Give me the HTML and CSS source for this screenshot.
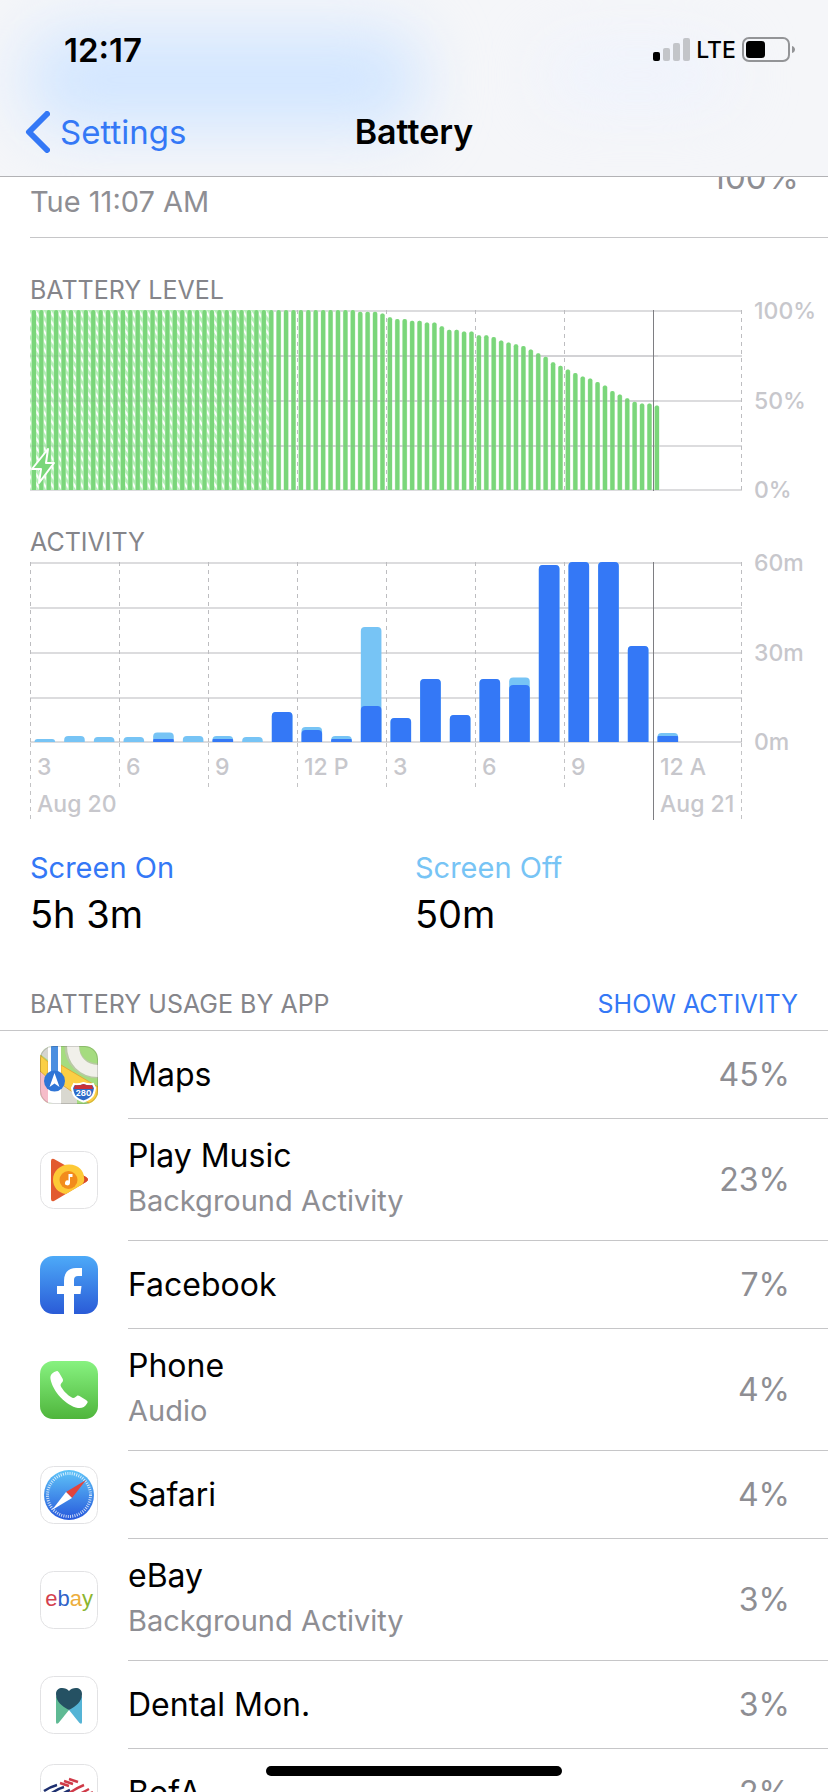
FILE: index.html
```html
<!DOCTYPE html>
<html lang="en">
<head>
<meta charset="utf-8">
<meta name="viewport" content="width=device-width, initial-scale=1">
<title>Battery</title>
<link rel="stylesheet" href="styles.css">
</head>
<body>
<div class="screen">
  <header class="header">
    <div class="status">
      <span class="clock">12:17</span>
      <div class="status-icons">
        <svg class="signal" viewBox="0 0 37 24" aria-hidden="true">
          <rect x="0" y="14" width="7" height="9" rx="2" fill="#000"/>
          <rect x="10" y="10" width="7" height="13" rx="2" fill="#c3c5c9"/>
          <rect x="20" y="5" width="7" height="18" rx="2" fill="#c3c5c9"/>
          <rect x="30" y="0" width="7" height="23" rx="2" fill="#c3c5c9"/>
        </svg>
        <span class="network">LTE</span>
        <svg class="cell" viewBox="0 0 54 26" aria-hidden="true">
          <rect x="1" y="1" width="46" height="23" rx="6" fill="none" stroke="#939497" stroke-width="2"/>
          <rect x="4" y="4" width="19" height="17" rx="3.500" fill="#000"/>
          <path d="M50 9c4 1 4 6 0 7z" fill="#939497"/>
        </svg>
      </div>
    </div>
    <nav class="nav">
      <a class="back" href="#">
        <svg class="chevron" viewBox="0 0 25 42" aria-hidden="true"><path d="M22 3 4 21 22 39" fill="none" stroke="#3478f6" stroke-width="6" stroke-linecap="round" stroke-linejoin="round"/></svg>
        Settings
      </a>
      <h1 class="title">Battery</h1>
    </nav>
  </header>

  <main class="content">
    <section class="charge">
      <span class="charge-time">Tue 11:07 AM</span>
      <span class="charge-level">100%</span>
    </section>

    <section class="panel">
      <h2 class="label">BATTERY LEVEL</h2>
      <div class="chart">
        <svg class="plot" id="level" viewBox="0 0 712 181" preserveAspectRatio="none" role="img" aria-label="Battery level"></svg>
        <div class="scale"><span>100%</span><span>50%</span><span>0%</span></div>
      </div>

      <h2 class="label label-activity">ACTIVITY</h2>
      <div class="chart">
        <svg class="plot" id="activity" viewBox="0 0 712 181" preserveAspectRatio="none" role="img" aria-label="Activity"></svg>
        <div class="scale"><span>60m</span><span>30m</span><span>0m</span></div>
      </div>
      <div class="hours">
        <div class="hour hour-day"><span>3</span><span>Aug 20</span></div>
        <div class="hour"><span>6</span></div>
        <div class="hour"><span>9</span></div>
        <div class="hour"><span>12 P</span></div>
        <div class="hour"><span>3</span></div>
        <div class="hour"><span>6</span></div>
        <div class="hour"><span>9</span></div>
        <div class="hour hour-day hour-midnight"><span>12 A</span><span>Aug 21</span></div>
      </div>

      <dl class="totals">
        <div class="total"><dt class="on">Screen On</dt><dd>5h 3m</dd></div>
        <div class="total"><dt class="off">Screen Off</dt><dd>50m</dd></div>
      </dl>
    </section>

    <section class="usage">
      <div class="usage-head">
        <h2 class="label">BATTERY USAGE BY APP</h2>
        <button class="toggle" type="button">SHOW ACTIVITY</button>
      </div>
      <ul class="apps">
        <li class="app">
          <svg class="icon" viewBox="0 0 58 58" aria-hidden="true">
            <defs><clipPath id="tile"><rect width="58" height="58" rx="13"/></clipPath></defs>
            <g clip-path="url(#tile)">
              <rect width="58" height="58" fill="#a5dc7f"/>
              <path d="M0 0h8v14L0 8z" fill="#d5d5d0"/>
              <path d="M0 24l8 7v27H0z" fill="#f6bdc9"/>
              <path d="M21 38l16 8v12H21z" fill="#d9d8d0"/>
              <path d="M0 9l8 7v16l-8-7zM21 19l37 22v17h-8L21 38z" fill="#fbcf45" stroke="#e0a93a" stroke-width="1"/>
              <path d="M32 0c0 14 11 25 26 25" fill="none" stroke="#b9c9a4" stroke-width="15"/>
              <path d="M33 0c0 14 10 25 25 25" fill="none" stroke="#f1f0ea" stroke-width="12"/>
              <rect x="8" y="0" width="13" height="58" fill="#fff"/>
              <rect x="11" y="0" width="7" height="30" fill="#4b8fe0"/>
              <circle cx="14.500" cy="35" r="10.500" fill="#2f75d6"/>
              <path d="M14.500 27l5 14-5-3.500-5 3.500z" fill="#fff"/>
              <path d="M34 38q4 1 9.500-1 5.500 2 9.500 1l2 4c-1 7-2 10-11.500 13.500C34 52 33 49 32 42z" fill="#2c6bc9" stroke="#fff" stroke-width="2"/>
              <path d="M35 39q4 1 8.500-1 4.500 2 8.500 1l1 4H34z" fill="#c8313a"/>
              <text class="shield" x="43.500" y="50" text-anchor="middle">280</text>
            </g>
            <rect x=".5" y=".5" width="57" height="57" rx="12.500" fill="none" stroke="#000" stroke-opacity=".15"/>
          </svg>
          <div class="names"><span class="name">Maps</span></div><span class="share">45%</span>
        </li>
        <li class="app app-tall">
          <svg class="icon" viewBox="0 0 58 58" aria-hidden="true">
            <rect x=".5" y=".5" width="57" height="57" rx="13" fill="#fff" stroke="#e2e2e4"/>
            <path d="M11 10q0-3 3-2l32 18q4 2.500 0 5L14 50q-3 1-3-2z" fill="#e25a2f"/>
            <path d="M39 22l7 4q4 2.500 0 5l-7 4z" fill="#d94a2c"/>
            <path d="M29 13.500c10 0 15 7 15 13q1 4-2 7L26 43c-8-1-13-7-13-14.500 0-8 7-15 16-15z" fill="#fdc936"/>
            <circle cx="28.500" cy="29" r="9" fill="#f28c1c"/>
            <path d="M28.500 23h4v3H30v6a2.500 2.500 0 1 1-1.500-2.400z" fill="#fff"/>
          </svg>
          <div class="names"><span class="name">Play Music</span><span class="detail">Background Activity</span></div><span class="share">23%</span>
        </li>
        <li class="app">
          <svg class="icon" viewBox="0 0 58 58" aria-hidden="true">
            <defs><linearGradient id="fb" x1="0" y1="0" x2="0" y2="1"><stop offset="0" stop-color="#4daaf8"/><stop offset="1" stop-color="#2a5bd7"/></linearGradient></defs>
            <rect width="58" height="58" rx="13" fill="url(#fb)"/>
            <path d="M24 58V38h-7v-8h7v-5c0-9 5-13 12-13h6v8h-4q-4 0-4 4v6h7.500l-1 8H34v20z" fill="#fff"/>
          </svg>
          <div class="names"><span class="name">Facebook</span></div><span class="share">7%</span>
        </li>
        <li class="app app-tall">
          <svg class="icon" viewBox="0 0 58 58" aria-hidden="true">
            <defs><linearGradient id="ph" x1="0" y1="0" x2="0" y2="1"><stop offset="0" stop-color="#87f280"/><stop offset="1" stop-color="#4fb53c"/></linearGradient></defs>
            <rect width="58" height="58" rx="13" fill="url(#ph)"/>
            <path d="M15.500 10.500c1.500-1 2.500-.5 3.500 1l3.500 6c1 2 .5 3-1 4.500-1 1.500-1.500 2 0 4.500 3 4.500 5 6.500 9.500 9.500 2 1.500 3 1 4.500 0 1.500-1.500 2.500-2 4-1l6.500 4c2 1.500 2 2 1 3.500-2 3.500-5 5-9 4.500C26 45 12.500 30 10.500 18c-.5-4 1.500-6 5-7.500z" fill="#fff"/>
          </svg>
          <div class="names"><span class="name">Phone</span><span class="detail">Audio</span></div><span class="share">4%</span>
        </li>
        <li class="app">
          <svg class="icon" viewBox="0 0 58 58" aria-hidden="true">
            <defs><linearGradient id="sf" x1="0" y1="0" x2="0" y2="1"><stop offset="0" stop-color="#5fc4f8"/><stop offset="1" stop-color="#2759dc"/></linearGradient></defs>
            <rect x=".5" y=".5" width="57" height="57" rx="13" fill="#fff" stroke="#e2e2e4"/>
            <circle cx="29" cy="29" r="25" fill="url(#sf)"/>
            <circle cx="29" cy="29" r="21.500" fill="none" stroke="#fff" stroke-opacity=".75" stroke-width="3" stroke-dasharray="1 1.250"/>
            <path d="M46 14L26 26l6 6z" fill="#e3443c"/>
            <path d="M12 44l14-18 6 6z" fill="#fff"/>
          </svg>
          <div class="names"><span class="name">Safari</span></div><span class="share">4%</span>
        </li>
        <li class="app app-tall">
          <svg class="icon" viewBox="0 0 58 58" aria-hidden="true">
            <rect x=".5" y=".5" width="57" height="57" rx="13" fill="#fff" stroke="#e2e2e4"/>
            <text class="ebay" x="29" y="35" text-anchor="middle"><tspan fill="#d4404f">e</tspan><tspan fill="#2f62c8">b</tspan><tspan fill="#edae3c">a</tspan><tspan fill="#8bb52f">y</tspan></text>
          </svg>
          <div class="names"><span class="name">eBay</span><span class="detail">Background Activity</span></div><span class="share">3%</span>
        </li>
        <li class="app">
          <svg class="icon" viewBox="0 0 58 58" aria-hidden="true">
            <rect x=".5" y=".5" width="57" height="57" rx="13" fill="#fff" stroke="#e2e2e4"/>
            <path d="M16 20l13 14-10.500 13q-2.500 2-2.500-1z" fill="#5fba94"/>
            <path d="M42 20L29 34l10.500 13q2.500 2 2.500-1z" fill="#55b4d6"/>
            <path d="M29 15c3-4 13-5 13 3 0 8-6 12-13 16-7-4-13-8-13-16 0-8 10-7 13-3z" fill="#255163"/>
          </svg>
          <div class="names"><span class="name">Dental Mon.</span></div><span class="share">3%</span>
        </li>
        <li class="app">
          <svg class="icon" viewBox="0 0 58 58" aria-hidden="true">
            <rect x=".5" y=".5" width="57" height="57" rx="13" fill="#fff" stroke="#e2e2e4"/>
            <g fill="none" stroke-width="2.500">
              <path d="M4 27q6-4 13-6M9 31q8-6 15-8M16 34q7-5 14-8" stroke="#1d2f6f"/>
              <path d="M20 19l9 3M24 17l9 3M29 15l9 3M24 33q10-8 20-12M32 35q9-6 17-10M41 36q6-5 12-8" stroke="#cf3a48"/>
            </g>
          </svg>
          <div class="names"><span class="name">BofA</span></div><span class="share">2%</span>
        </li>
      </ul>
    </section>
  </main>
  <div class="home-bar"></div>
</div>
<script src="charts.js"></script>
</body>
</html>
```
FILE: styles.css
```css
* { box-sizing: border-box; }

body {
  margin: 0;
  background: #fff;
  color: #000;
  font-family: Inter, "Liberation Sans", sans-serif;
  font-size: 32px;
  line-height: 40px;
}

h1, h2, dl, dd, ul { margin: 0; padding: 0; }

.screen {
  display: flex;
  flex-direction: column;
  height: 100vh;
  overflow: hidden;
  position: relative;
}

.header {
  position: relative;
  flex: none;
  overflow: hidden;
  background: #f5f6f9;
  border-bottom: 1px solid #b2b2b5;
}

.header::before,
.header::after {
  content: "";
  position: absolute;
  border-radius: 40px;
  filter: blur(32px);
}

.header::before {
  left: 3%;
  top: 30px;
  width: 48%;
  height: 100px;
  background: #d2e6ff;
}

.header::after {
  right: 12%;
  top: 50px;
  width: 22%;
  height: 50px;
  background: #edf2fe;
}

.status,
.nav { position: relative; z-index: 1; }

.status {
  display: flex;
  align-items: center;
  justify-content: space-between;
  padding: 30px 32px 0 64px;
}

.clock { font-weight: 600; font-size: 33px; }

.status-icons { display: flex; align-items: center; gap: 6px; }
.signal { width: 37px; height: 24px; }
.network { font-size: 23px; font-weight: 500; }
.cell { width: 54px; height: 26px; }

.nav {
  display: grid;
  grid-template-columns: 1fr auto 1fr;
  align-items: center;
  height: 84px;
  margin-top: 22px;
  padding: 0 25px 4px;
}

.back {
  display: flex;
  align-items: center;
  gap: 10px;
  color: #3478f6;
  font-size: 33px;
  text-decoration: none;
}

.chevron { width: 25px; height: 42px; }
.title { font-size: 34px; font-weight: 600; }

.content { flex: 1; min-height: 0; overflow: hidden; }

.charge {
  display: flex;
  align-items: center;
  justify-content: space-between;
  height: 122px;
  margin: -61px 0 0 30px;
  padding-right: 29px;
  border-bottom: 1px solid #c6c6c8;
  color: #8e8e93;
}

.charge-time { align-self: flex-end; padding-bottom: 15px; font-size: 29px; }
.charge-level { font-size: 33px; }

.panel { padding: 36px 0 0 30px; }

.label {
  color: #85858a;
  font-size: 25px;
  font-weight: 400;
  line-height: 32px;
}

.label-activity { margin-top: 35px; }

.chart { display: flex; margin-top: 4px; }
.plot { flex: 1; min-width: 0; height: 181px; }

.scale {
  display: flex;
  flex: none;
  flex-direction: column;
  justify-content: space-between;
  width: 86px;
  margin: -15px 0;
  padding-left: 12px;
}

.scale,
.hours {
  color: #c7c7cc;
  font-size: 23px;
  font-weight: 500;
  line-height: 32px;
}

.hours {
  display: grid;
  grid-template-columns: repeat(8, 1fr);
  align-items: start;
  margin-right: 86px;
}

.hour {
  display: flex;
  flex-direction: column;
  gap: 5px;
  height: 44px;
  padding: 8px 0 0 7px;
  white-space: nowrap;
  background: repeating-linear-gradient(#c3c3c5 0 4px, transparent 4px 8px) 0 0 / 1px 100% no-repeat;
}

.hour-day { height: 77px; }

.hour-midnight {
  background:
    linear-gradient(#7e7e82, #7e7e82) 0 0 / 1px 100% no-repeat,
    repeating-linear-gradient(#c3c3c5 0 4px, transparent 4px 8px) 100% 0 / 1px 100% no-repeat;
}

.totals { display: flex; padding-top: 28px; }
.total { flex: 0 0 385px; }
.total dt { font-size: 29px; }
.total dd { margin-top: 2px; font-size: 38px; line-height: 48px; }
.on { color: #3478f6; }
.off { color: #77c4f5; }

.usage-head {
  display: flex;
  justify-content: space-between;
  padding: 50px 30px 10px;
  border-bottom: 1px solid #c6c6c8;
}

.toggle {
  padding: 0;
  border: 0;
  background: none;
  color: #3478f6;
  font: inherit;
  font-size: 25px;
  line-height: 32px;
}

.apps { list-style: none; }

.app {
  display: flex;
  align-items: center;
  height: 88px;
  padding-left: 40px;
}

.app-tall { height: 122px; }
.icon { flex: none; width: 58px; height: 58px; margin-right: 30px; }

.names {
  display: flex;
  flex: 1;
  flex-direction: column;
  justify-content: center;
  gap: 5px;
  align-self: stretch;
  border-bottom: 1px solid #c6c6c8;
}

.app-tall .names { padding-bottom: 2px; }

.detail { color: #8e8e93; font-size: 29px; }

.share {
  display: flex;
  align-items: center;
  align-self: stretch;
  padding-right: 38px;
  border-bottom: 1px solid #c6c6c8;
  color: #8e8e93;
}

.shield { fill: #fff; font-size: 8px; font-weight: 700; }
.ebay { font-family: "Liberation Sans", Arial, sans-serif; font-size: 22px; }
.ebay tspan { stroke: currentColor; stroke-width: 0; }

.home-bar {
  position: absolute;
  left: 50%;
  bottom: 16px;
  width: 296px;
  height: 10px;
  margin-left: -148px;
  border-radius: 5px;
  background: #000;
}
```
FILE: charts.js
```js
const NS = "http://www.w3.org/2000/svg";
const WIDTH = 712;
const HEIGHT = 180;

function draw(parent, tag, attributes) {
  const node = document.createElementNS(NS, tag);
  for (const [key, value] of Object.entries(attributes)) node.setAttribute(key, value);
  parent.appendChild(node);
  return node;
}

function drawGrid(svg) {
  for (let i = 0; i <= 4; i += 1) {
    draw(svg, "rect", { x: 0, y: Math.min(i * 45, 179), width: WIDTH, height: 2, fill: "#dcdcde" });
  }
  for (let i = 0; i <= 8; i += 1) {
    if (i === 7) continue;
    const x = Math.min(i * 89, WIDTH - 1) + 0.5;
    draw(svg, "line", { x1: x, x2: x, y1: 0, y2: 181, stroke: "#bdbdc0", "stroke-dasharray": "4 4" });
  }
}

function drawMidnight(svg) {
  draw(svg, "line", { x1: 623.5, x2: 623.5, y1: 0, y2: 181, stroke: "#7e7e82" });
}

function column(svg, x, width, height, radius, fill) {
  const r = Math.min(radius, height);
  const top = HEIGHT - height;
  draw(svg, "path", {
    d: `M${x} ${HEIGHT}V${top + r}Q${x} ${top} ${x + r} ${top}H${x + width - r}Q${x + width} ${top} ${x + width} ${top + r}V${HEIGHT}z`,
    fill
  });
}

const levels = [
  ...Array(44).fill(100), 99, 99, 99, 98, 96, 95, 95, 94, 94, 93, 93, 91, 89, 89, 88, 88,
  86, 86, 85, 83, 82, 81, 80, 78, 76, 74, 71, 69, 67, 65, 63, 62, 60, 58, 55, 53, 51, 49, 48, 48, 47
];
const PITCH = WIDTH / 96;

const level = document.getElementById("level");
drawGrid(level);
const defs = draw(level, "defs", {});
const hatch = draw(defs, "pattern", { id: "hatch", x: 1.4, width: PITCH, height: 9, patternUnits: "userSpaceOnUse" });
draw(hatch, "rect", { width: PITCH, height: 9, fill: "#b4efb6" });
draw(hatch, "path", { d: "M4.400 0V4L7.400 8.500V4.500z", fill: "#fff" });
draw(level, "rect", { x: 0, y: 0, width: 240, height: HEIGHT, fill: "url(#hatch)" });
levels.forEach((value, i) => {
  column(level, 1.4 + i * PITCH, 5, value * 1.8, 2, "#c9f0c9");
  column(level, 1.8 + i * PITCH, 4.2, value * 1.8, 2, "#7ad67a");
});
for (let i = 1; i < 4; i += 1) {
  draw(level, "rect", { x: 0, y: i * 45, width: 628, height: 2, fill: "#8e8e93", "fill-opacity": 0.12 });
}
drawMidnight(level);
draw(level, "path", {
  d: "M18 139L2 159H11L9 173L24 153H16z",
  fill: "#7ad67a", stroke: "#fff", "stroke-width": 2, "stroke-linejoin": "round"
});

const minutes = [
  [1, 0], [2, 0], [1.7, 0], [1.7, 0], [3.2, 1], [2, 0], [2, 1], [1.7, 0], [10, 10], [5, 4], [2, 1],
  [38.3, 12], [8, 8], [21, 21], [9, 9], [21, 21], [21.5, 19], [59, 59], [60, 60], [60, 60], [32, 32], [3, 2]
];

const activity = document.getElementById("activity");
drawGrid(activity);
minutes.forEach(([total, screenOn], i) => {
  const x = 4.5 + i * WIDTH / 24;
  column(activity, x, 20.6, total * 3, 4, "#77c4f5");
  if (screenOn) column(activity, x, 20.6, screenOn * 3, screenOn > 2 ? 4 : 1, "#3478f6");
});
drawMidnight(activity);
```
